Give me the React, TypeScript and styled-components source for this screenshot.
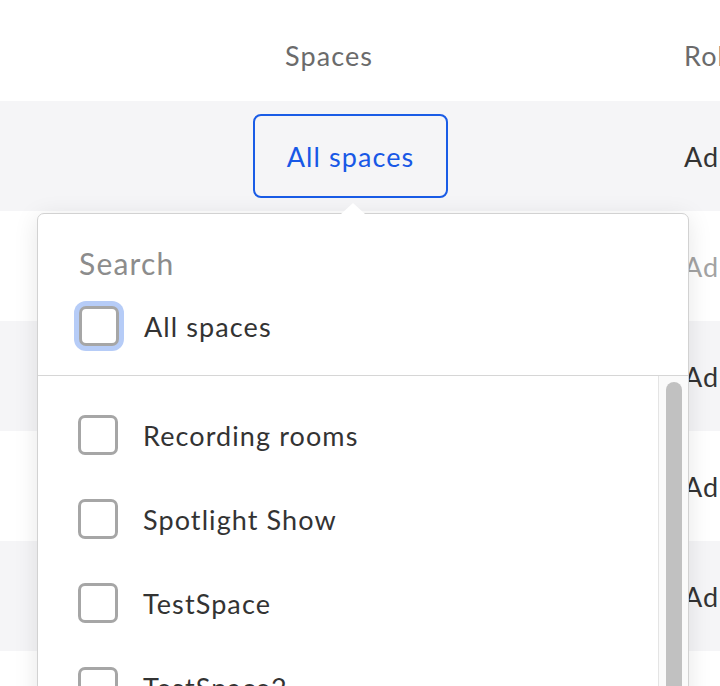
import styled, { createGlobalStyle } from 'styled-components';

const GlobalStyle = createGlobalStyle`
  html, body {
    margin: 0;
    padding: 0;
    overflow: hidden;
    background: #fff;
    font-family: Lato, "Noto Sans", sans-serif;
  }
`;

const Table = styled.div`
  display: flex;
  flex-direction: column;
  width: 780px;
`;

const Row = styled.div<{ $striped?: boolean; $header?: boolean }>`
  display: grid;
  grid-template-columns: 253px 431px 1fr;
  align-items: center;
  box-sizing: border-box;
  height: ${(p) => (p.$header ? '101px' : '110px')};
  padding-top: ${(p) => (p.$header ? '10px' : '0')};
  background: ${(p) => (p.$striped ? '#f5f5f7' : '#fff')};
`;

const HeaderCell = styled.div<{ $indent?: number }>`
  padding-left: ${(p) => p.$indent || 0}px;
  font-size: 27px;
  letter-spacing: 1.1px;
  color: #6b6b6b;
  white-space: nowrap;
`;

const SpacesCell = styled.div`
  position: relative;
  height: 100%;
  display: flex;
  align-items: center;
`;

const RoleCell = styled.div<{ $muted?: boolean }>`
  font-size: 27px;
  letter-spacing: 1.1px;
  color: ${(p) => (p.$muted ? '#a3a3a3' : '#333')};
  white-space: nowrap;
`;

const FilterButton = styled.button`
  width: 195px;
  height: 84px;
  padding: 0;
  border: 2px solid #1a5ce6;
  border-radius: 8px;
  background: transparent;
  color: #1858e6;
  font-family: inherit;
  font-size: 27px;
  letter-spacing: 1.1px;
  cursor: pointer;
`;

const Popover = styled.div`
  position: absolute;
  left: -216px;
  top: 112px;
  width: 652px;
  box-sizing: border-box;
  background: #fff;
  border: 1px solid #d2d2d2;
  border-radius: 7px;
  box-shadow: 0 4px 24px rgba(0, 0, 0, 0.1);
  z-index: 5;
`;

const Arrow = styled.div`
  position: absolute;
  top: -11px;
  left: 303px;
  width: 0;
  height: 0;
  border-left: 12px solid transparent;
  border-right: 12px solid transparent;
  border-bottom: 11px solid #fff;
`;

const TopSection = styled.div`
  display: flex;
  flex-direction: column;
  gap: 17px;
  padding: 29px 40px 23px 41px;
  border-bottom: 1px solid #d6d6d6;
`;

const SearchInput = styled.input`
  height: 40px;
  border: none;
  outline: none;
  padding: 0;
  font-family: inherit;
  font-size: 30px;
  letter-spacing: 1.2px;
  color: #333;
  background: transparent;

  &::placeholder {
    color: #8c8c8c;
  }
`;

const OptionRow = styled.label<{ $list?: boolean }>`
  display: flex;
  align-items: center;
  gap: 25px;
  height: ${(p) => (p.$list ? '84px' : '52px')};
  font-size: 27px;
  letter-spacing: 1.1px;
  color: #333;
  white-space: nowrap;
  cursor: pointer;
`;

const Box = styled.span<{ $focused?: boolean }>`
  flex: none;
  width: 40px;
  height: 40px;
  box-sizing: border-box;
  border: 3px solid #a6a6a6;
  border-radius: 7px;
  background: #fff;
  box-shadow: ${(p) => (p.$focused ? '0 0 0 5px #b6ccf7' : 'none')};
`;

const ListArea = styled.div`
  display: flex;
  height: 400px;
  overflow: hidden;
`;

const Items = styled.div`
  flex: 1;
  padding: 17px 0 0 40px;
`;

const ScrollTrack = styled.div`
  flex: none;
  display: flex;
  width: 30px;
  box-sizing: border-box;
  padding: 6px 6px 0 7px;
  background: #fafafa;
  border-left: 1px solid #e4e4e4;
`;

const ScrollThumb = styled.div`
  flex: 1;
  border-radius: 8px;
  background: #c1c1c1;
`;

const spaces = ['Recording rooms', 'Spotlight Show', 'TestSpace', 'TestSpace2', 'Webinars'];

export default function App() {
  return (
    <>
      <GlobalStyle />
      <Table>
        <Row $header>
          <div />
          <HeaderCell $indent={32}>Spaces</HeaderCell>
          <HeaderCell>Role</HeaderCell>
        </Row>
        <Row $striped>
          <div />
          <SpacesCell>
            <FilterButton>All spaces</FilterButton>
            <Popover>
              <Arrow />
              <TopSection>
                <SearchInput placeholder="Search" />
                <OptionRow>
                  <Box $focused />
                  All spaces
                </OptionRow>
              </TopSection>
              <ListArea>
                <Items>
                  {spaces.map((s) => (
                    <OptionRow $list key={s}>
                      <Box />
                      {s}
                    </OptionRow>
                  ))}
                </Items>
                <ScrollTrack>
                  <ScrollThumb />
                </ScrollTrack>
              </ListArea>
            </Popover>
          </SpacesCell>
          <RoleCell>Admin</RoleCell>
        </Row>
        <Row>
          <div />
          <div />
          <RoleCell $muted>Admin</RoleCell>
        </Row>
        <Row $striped>
          <div />
          <div />
          <RoleCell>Admin</RoleCell>
        </Row>
        <Row>
          <div />
          <div />
          <RoleCell>Admin</RoleCell>
        </Row>
        <Row $striped>
          <div />
          <div />
          <RoleCell>Admin</RoleCell>
        </Row>
        <Row>
          <div />
          <div />
          <RoleCell>Admin</RoleCell>
        </Row>
      </Table>
    </>
  );
}
